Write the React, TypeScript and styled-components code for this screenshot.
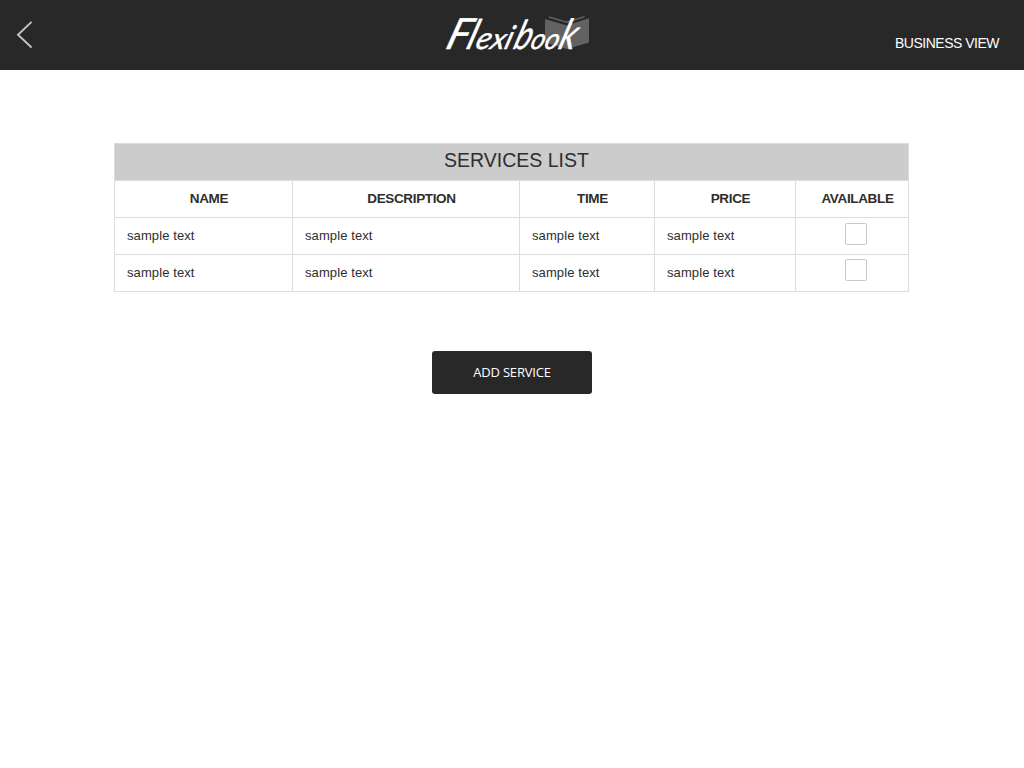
import React from "react";
import styled, { createGlobalStyle } from "styled-components";

const GlobalStyle = createGlobalStyle`
  * { box-sizing: border-box; }
  body {
    margin: 0;
    background: #fff;
    color: #2e2e2e;
    font-family: "Liberation Sans", Arial, sans-serif;
  }
`;

const Header = styled.header`
  display: grid;
  grid-template-columns: 1fr 160px 1fr;
  height: 70px;
  background: #282828;
`;

const BackButton = styled.button`
  justify-self: start;
  width: 48px;
  height: 70px;
  padding: 0;
  border: 0;
  background: none;
  svg { display: block; }
`;

const Logo = styled.svg`
  display: block;
  width: 160px;
  height: 70px;
`;

const Script = styled.text`
  font-family: "Lato", sans-serif;
  font-style: italic;
  font-weight: 400;
  fill: #fff;
  stroke: #fff;
  stroke-width: 0.4px;
  stroke-linejoin: round;
`;

const ViewLink = styled.a`
  justify-self: end;
  padding: 35px 25px 0 0;
  color: #fff;
  font-size: 14px;
  line-height: 16px;
  letter-spacing: -0.5px;
`;

const Main = styled.main`
  display: flex;
  flex-direction: column;
  align-items: center;
  padding: 73px 1px 0 0;
`;

const Table = styled.table`
  width: 795px;
  table-layout: fixed;
  border-collapse: collapse;
`;

const Row = styled.tr`
  height: 37px;
`;

const Title = styled.th`
  padding: 0 0 3px 10px;
  border: 1px solid #dcdcdc;
  background: #ccc;
  font-size: 19.5px;
  font-weight: 400;
  letter-spacing: 0;
`;

const HeadCell = styled.th`
  padding: 0 0 2px 11px;
  border: 1px solid #dcdcdc;
  font-size: 13.5px;
  font-weight: 700;
  letter-spacing: -0.35px;
`;

const Cell = styled.td`
  padding: 0 0 2px 12px;
  border: 1px solid #dcdcdc;
  font-size: 13px;
  letter-spacing: 0.1px;
`;

const CheckCell = styled.td<{ $lift: number }>`
  padding: 0 0 ${(p) => p.$lift}px 8px;
  border: 1px solid #dcdcdc;
`;

const Checkbox = styled.input`
  display: block;
  appearance: none;
  width: 22px;
  height: 22px;
  margin: 0 auto;
  border: 1px solid #c8c8c8;
  border-radius: 2px;
  background: #fff;
`;

const AddButton = styled.button`
  width: 160px;
  height: 43px;
  margin: 59px 0 0 1px;
  padding: 0 0 2px;
  border: 0;
  border-radius: 3px;
  background: #282828;
  color: #fff;
  font-family: "Open Sans", sans-serif;
  font-size: 13px;
  letter-spacing: -0.2px;
`;

const columns = [
  { label: "NAME", width: 178 },
  { label: "DESCRIPTION", width: 227 },
  { label: "TIME", width: 135 },
  { label: "PRICE", width: 141 },
  { label: "AVAILABLE", width: 113 },
];

const services = [
  { values: ["sample text", "sample text", "sample text", "sample text"], lift: 5 },
  { values: ["sample text", "sample text", "sample text", "sample text"], lift: 6 },
];

const letters = [
  { char: "F", x: 12, size: 43, scale: 1 },
  { char: "l", x: 33, size: 41, scale: 0.9 },
  { char: "e", x: 42, size: 31, scale: 1 },
  { char: "x", x: 57, size: 29, scale: 1.05 },
  { char: "i", x: 71, size: 33, scale: 0.9 },
  { char: "b", x: 80, size: 40, scale: 0.8 },
  { char: "o", x: 97, size: 29, scale: 0.92 },
  { char: "o", x: 111, size: 29, scale: 0.92 },
  { char: "k", x: 125, size: 42, scale: 0.82 },
];

export default function App() {
  return (
    <>
      <GlobalStyle />
      <Header>
        <BackButton aria-label="Back">
          <svg width="48" height="70" viewBox="0 0 48 70" fill="none">
            <path d="M31.6 21.9 L18 34.7 L31.6 47.5" stroke="#c4c4c4" strokeWidth="1.9" />
          </svg>
        </BackButton>
        <Logo viewBox="0 0 160 70" aria-label="Flexibook">
          <path d="M113 19 L135 25.5 L157 18 V42.5 L135 49 L113 42.5 Z" fill="#626262" />
          <path d="M113.5 18.2 L135 24 L156.5 17.5" stroke="#282828" strokeWidth="1.4" fill="none" />
          <path d="M117 17 L135 22.3 L152.5 16.7" stroke="#626262" strokeWidth="1.5" fill="none" />
          {letters.map((l, i) => (
            <Script
              key={i}
              fontSize={l.size}
              transform={`translate(${l.x} 49) skewX(-18) scale(${l.scale} 1)`}
            >
              {l.char}
            </Script>
          ))}
        </Logo>
        <ViewLink>BUSINESS VIEW</ViewLink>
      </Header>
      <Main>
        <Table>
          <colgroup>
            {columns.map((c) => (
              <col key={c.label} width={c.width} />
            ))}
          </colgroup>
          <thead>
            <Row>
              <Title colSpan={5}>SERVICES LIST</Title>
            </Row>
            <Row>
              {columns.map((c) => (
                <HeadCell key={c.label}>{c.label}</HeadCell>
              ))}
            </Row>
          </thead>
          <tbody>
            {services.map((s, i) => (
              <Row key={i}>
                {s.values.map((v, j) => (
                  <Cell key={j}>{v}</Cell>
                ))}
                <CheckCell $lift={s.lift}>
                  <Checkbox type="checkbox" aria-label="Available" />
                </CheckCell>
              </Row>
            ))}
          </tbody>
        </Table>
        <AddButton>ADD SERVICE</AddButton>
      </Main>
    </>
  );
}
